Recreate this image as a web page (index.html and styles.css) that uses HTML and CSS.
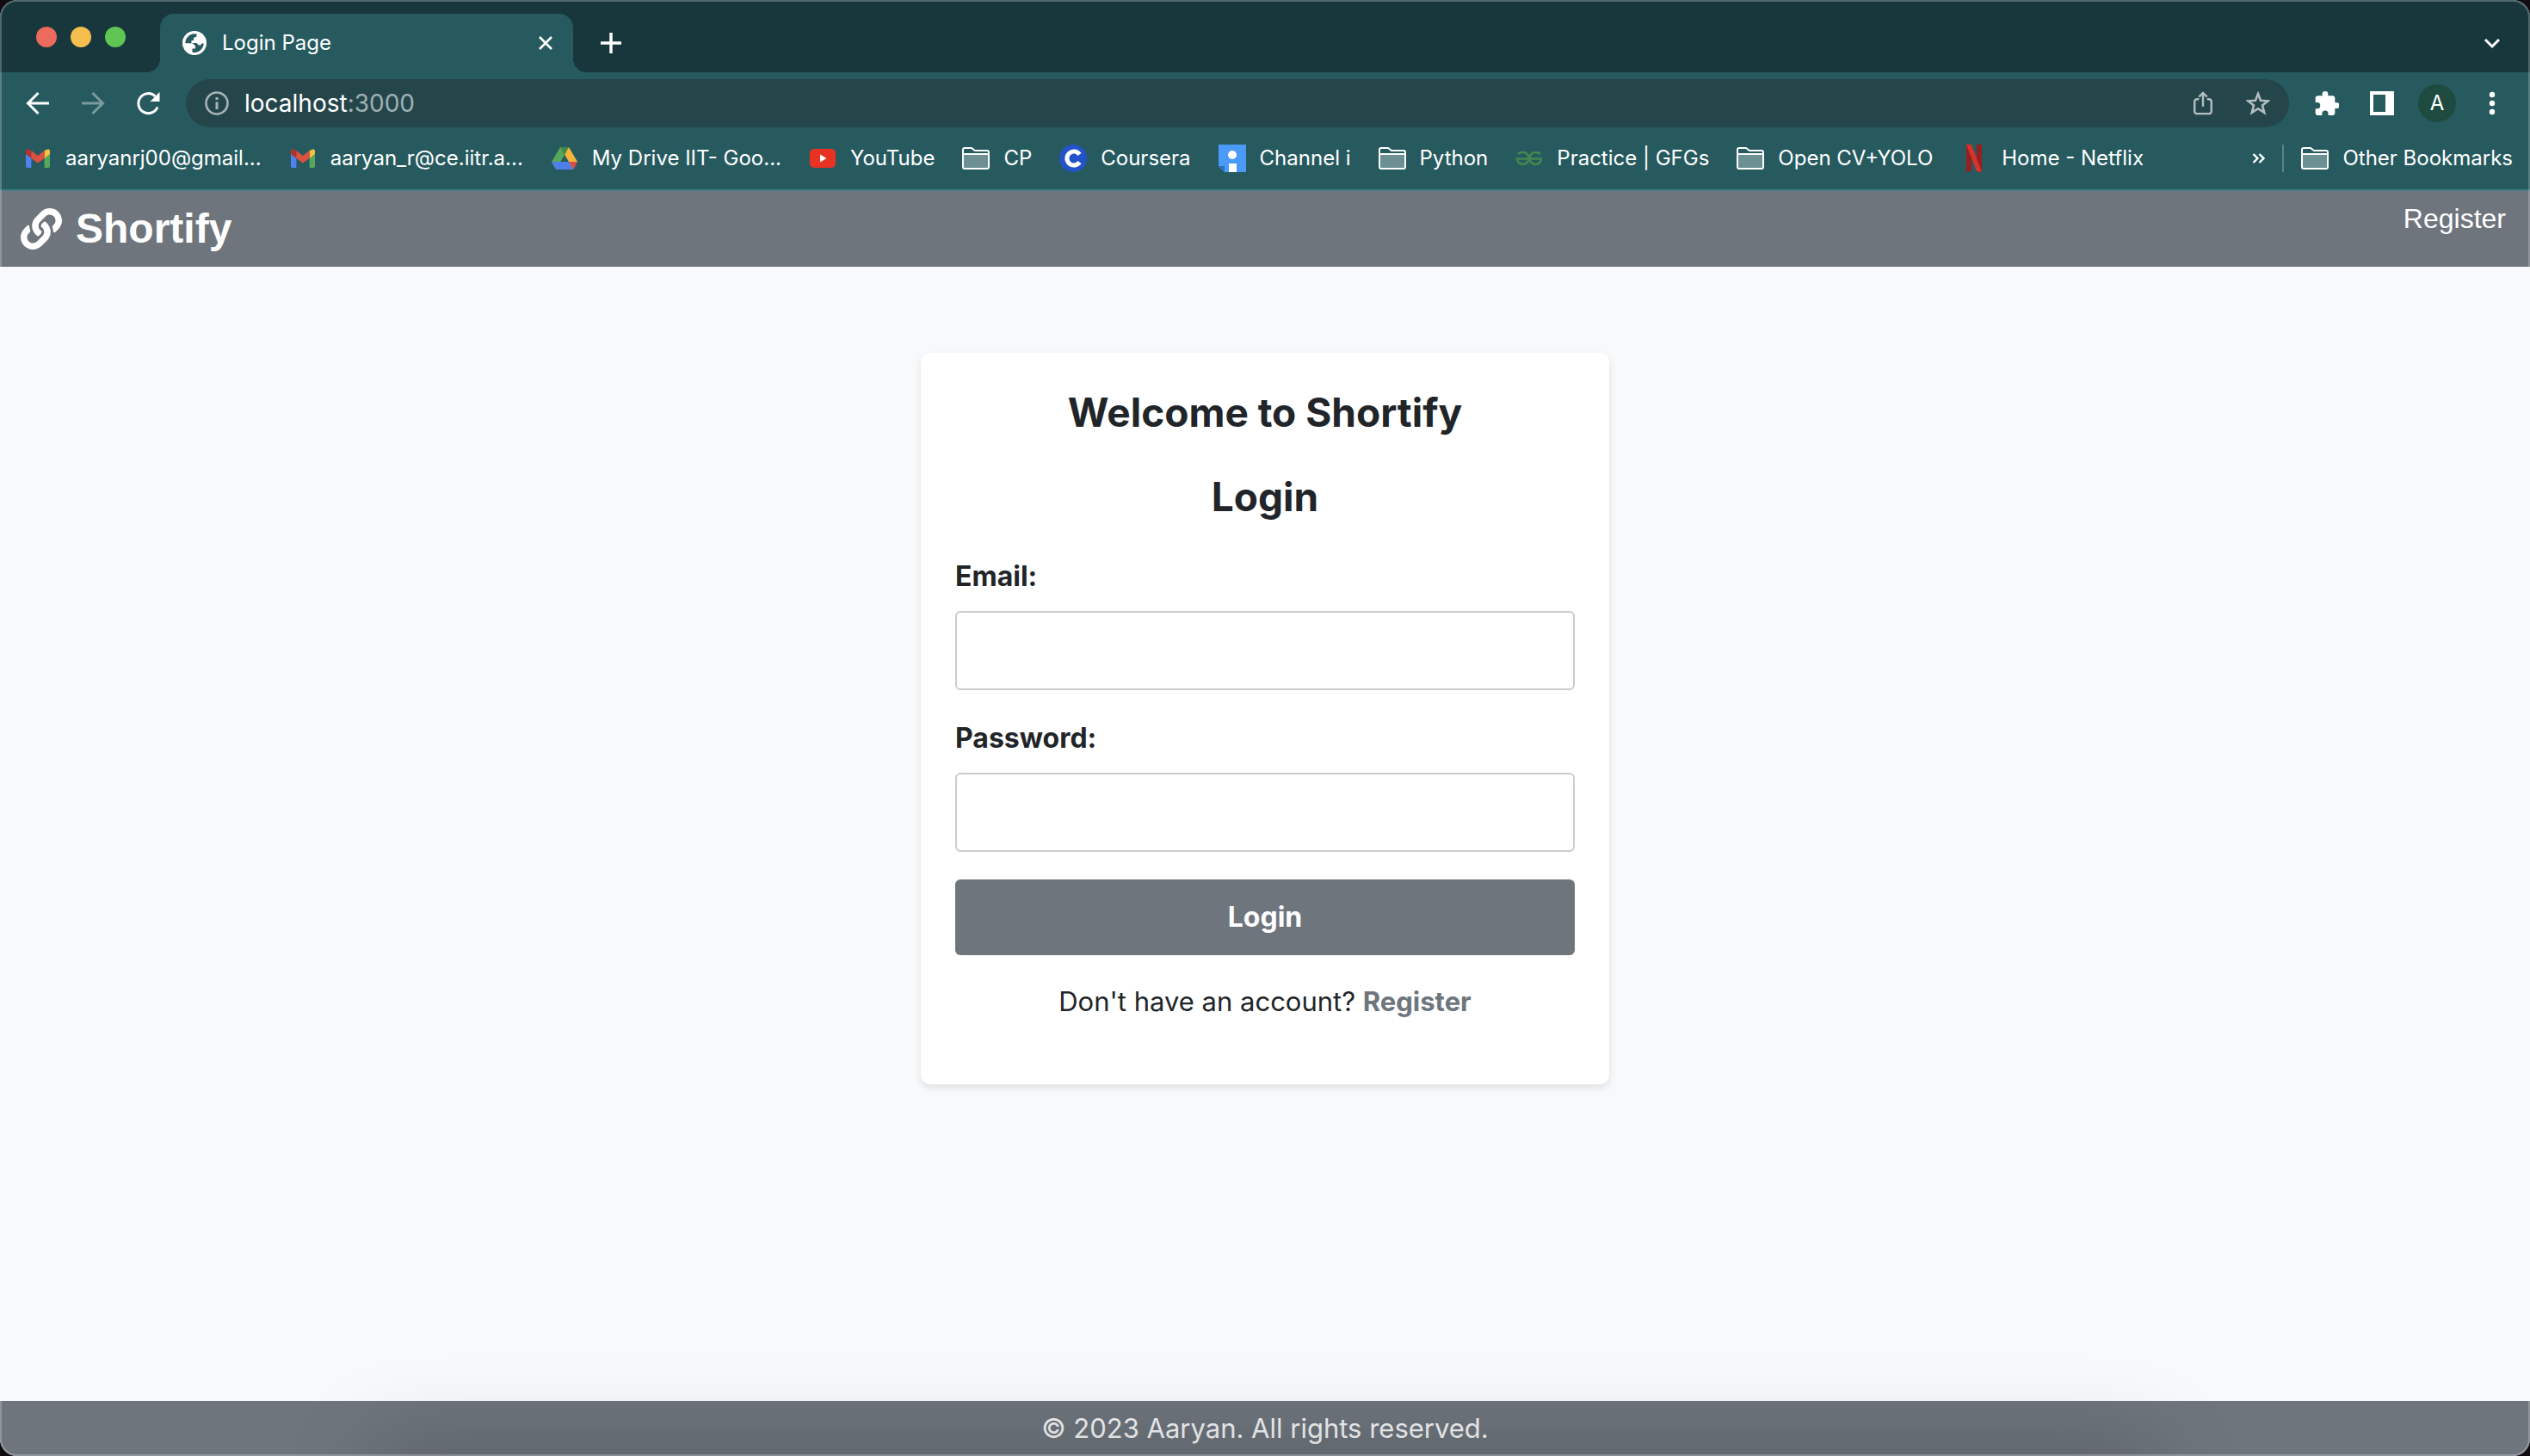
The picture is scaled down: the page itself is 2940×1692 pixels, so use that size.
FILE: index.html
```html
<!DOCTYPE html>
<html lang="en">
<head>
<meta charset="utf-8">
<title>Login Page</title>
<link rel="stylesheet" href="styles.css">
</head>
<body>
<svg class="defs" aria-hidden="true">
  <symbol id="folder" viewBox="0 0 32 26">
    <path d="M2 8H30V24H2Z" fill="#fff" fill-opacity=".32"/>
    <path d="M1 3a2 2 0 0 1 2-2h8l4 3h14a2 2 0 0 1 2 2v17a2 2 0 0 1-2 2H3a2 2 0 0 1-2-2ZM1 8h30" fill="none" stroke="#fff" stroke-width="2"/>
  </symbol>
  <symbol id="gmail" viewBox="0 0 28 22">
    <path d="M0 5v15a2 2 0 0 0 2 2h4.400V9Z" fill="#4e82ee"/>
    <path d="M28 5v15a2 2 0 0 1-2 2h-4.400V9Z" fill="#58a55c"/>
    <path d="M21.600 2 26 .2A2.600 2.600 0 0 1 28 3v3l-6.400 5Z" fill="#f5bf42"/>
    <path d="M6.400 2 2.600.2A2.600 2.600 0 0 0 0 3v3l6.400 5Z" fill="#b5322c"/>
    <path d="M6.400 2 14 8l7.600-6v9L14 16.500 6.400 11Z" fill="#dc5040"/>
  </symbol>
</svg>

<div class="window">
  <header class="tabstrip">
    <div class="lights">
      <button class="light red" aria-label="Close window"></button>
      <button class="light yellow" aria-label="Minimize window"></button>
      <button class="light green" aria-label="Zoom window"></button>
    </div>
    <div class="tab">
      <svg class="i28" viewBox="0 0 28 28"><circle cx="14" cy="14" r="14" fill="#fff"/><path d="M3.300 14.300A11 11 0 0 1 16.500 3.400V6.500L13 8V11h-2.500v3H16.500l2.500 2.500h2l1.500-2h2.300A11 11 0 0 1 11.500 24.700V20.500H15V17.500L12 14.300Z" fill="#265a5f"/></svg>
      <span class="tab-title">Login Page</span>
      <button class="icon" aria-label="Close tab"><svg class="i28" viewBox="0 0 28 28"><path d="m7 7 14 14M21 7 7 21" stroke="#fff" stroke-width="2.600"/></svg></button>
    </div>
    <button class="icon" aria-label="New tab"><svg class="i28" viewBox="0 0 28 28"><path d="M14 2v24M2 14h24" stroke="#fff" stroke-width="3.500"/></svg></button>
    <button class="icon push" aria-label="Search tabs"><svg class="i28" viewBox="0 0 28 28"><path d="m6 10 8 8 8-8" fill="none" stroke="#fff" stroke-width="3"/></svg></button>
  </header>

  <div class="toolbar">
    <button class="icon" aria-label="Back"><svg class="i28" viewBox="0 0 28 28"><path d="M27 14H3M14.500 2 2.500 14l12 12" fill="none" stroke="#fff" stroke-width="3"/></svg></button>
    <button class="icon" aria-label="Forward"><svg class="i28" viewBox="0 0 28 28"><path d="M1 14h24M13.500 2l12 12-12 12" fill="none" stroke="#7b9a9d" stroke-width="3"/></svg></button>
    <button class="icon" aria-label="Reload"><svg class="i28" viewBox="0 0 28 28"><path d="M25 18.500A11.500 11.500 0 1 1 22.500 6" fill="none" stroke="#fff" stroke-width="3"/><path d="M27.500 1v11h-11Z" fill="#fff"/></svg></button>
    <div class="omnibox">
      <button class="icon" aria-label="Site information"><svg class="i28" viewBox="0 0 28 28"><circle cx="14" cy="14" r="12.500" fill="none" stroke="#a7b4b7" stroke-width="2.600"/><path d="M12.500 12.500h3v8.500h-3ZM12.500 7h3v3h-3Z" fill="#a7b4b7"/></svg></button>
      <div class="url" role="textbox" aria-label="Address" tabindex="0">localhost<span class="port">:3000</span></div>
      <button class="icon" aria-label="Share"><svg class="i28" viewBox="0 0 28 30"><path d="M9 10H6.500A3 3 0 0 0 3.500 13v12a3 3 0 0 0 3 3h15a3 3 0 0 0 3-3V13a3 3 0 0 0-3-3H19M14 19V2.500M9 7l5-5 5 5" fill="none" stroke="#b3bdbf" stroke-width="2.600"/></svg></button>
      <button class="icon" aria-label="Bookmark this page"><svg class="i28" viewBox="0 0 28 28"><path d="m14 3 3 7.700 8.500.6-6.500 5.300 2.200 8.200L14 20.200l-7.200 4.600L9 16.600l-6.500-5.300 8.500-.6Z" fill="none" stroke="#b3bdbf" stroke-width="2.600"/></svg></button>
    </div>
    <button class="icon" aria-label="Extensions"><svg class="i28" viewBox="1.500 1 21 21"><path d="M20.500 11H19V7c0-1.100-.9-2-2-2h-4V3.500a2.500 2.500 0 0 0-5 0V5H4c-1.100 0-2 .9-2 2v3.800h1.500a2.700 2.700 0 0 1 0 5.400H2V20c0 1.100.9 2 2 2h3.800v-1.500a2.700 2.700 0 0 1 5.400 0V22H17c1.100 0 2-.9 2-2v-4h1.500a2.500 2.500 0 0 0 0-5Z" fill="#fff"/></svg></button>
    <button class="icon" aria-label="Side panel"><svg class="i28" viewBox="0 0 28 28"><path d="M0 0h28v28H0ZM4 4v20h14V4Z" fill="#fff" fill-rule="evenodd"/></svg></button>
    <button class="avatar" aria-label="Profile">A</button>
    <button class="icon" aria-label="Menu"><svg class="i28" viewBox="0 0 28 28"><g fill="#fff"><circle cx="14" cy="4" r="3.200"/><circle cx="14" cy="14" r="3.200"/><circle cx="14" cy="24" r="3.200"/></g></svg></button>
  </div>

  <nav class="bookmarks" aria-label="Bookmarks">
    <a href="#"><svg class="fav" viewBox="-2 -5 32 32"><use href="#gmail" width="28" height="22"/></svg>aaryanrj00@gmail...</a>
    <a href="#"><svg class="fav" viewBox="-2 -5 32 32"><use href="#gmail" width="28" height="22"/></svg>aaryan_r@ce.iitr.a...</a>
    <a href="#"><svg class="fav" viewBox="0 0 32 32"><path d="M11 3 1 20l5 9 10-17Z" fill="#58a55c"/><path d="M11 3h10l10 17H21Z" fill="#f3b43c"/><path d="M11 3 16 12 21 3Z" fill="#3f8b45"/><path d="M1 20h30l-5 9H6Z" fill="#4e7fe8"/><path d="M21 20h10l-5 9Z" fill="#d9503f"/></svg>My Drive IIT- Goo...</a>
    <a href="#"><svg class="fav" viewBox="0 0 32 32"><rect x="1" y="5" width="30" height="22" rx="5" fill="#e83323"/><path d="m13 11.500 7.500 4.500-7.500 4.500Z" fill="#fff"/></svg>YouTube</a>
    <a href="#"><svg class="fav" viewBox="0 -3 32 32"><use href="#folder" width="32" height="26"/></svg>CP</a>
    <a href="#"><svg class="fav" viewBox="0 0 32 32"><circle cx="16" cy="16" r="16" fill="#2453c9"/><path d="M23.500 11.500a8 8 0 1 0 0 9" fill="none" stroke="#fff" stroke-width="5"/></svg>Coursera</a>
    <a href="#"><svg class="fav" viewBox="0 0 32 32"><path d="M0 0h32v32H7L0 25Z" fill="#4a9afa"/><path d="M0 25h7v7Z" fill="#2c72cc"/><circle cx="16" cy="12" r="5" fill="#fff"/><path d="M12 22h9v10h-9Z" fill="#fff"/></svg>Channel i</a>
    <a href="#"><svg class="fav" viewBox="0 -3 32 32"><use href="#folder" width="32" height="26"/></svg>Python</a>
    <a href="#"><svg class="fav" viewBox="0 0 32 32"><path d="M3 11Q5 9 8.500 9A6.800 7 0 1 1 2 16.500H30A6.800 7 0 1 1 23.500 9Q27 9 29 11" fill="none" stroke="#43884f" stroke-width="2.600"/></svg>Practice | GFGs</a>
    <a href="#"><svg class="fav" viewBox="0 -3 32 32"><use href="#folder" width="32" height="26"/></svg>Open CV+YOLO</a>
    <a href="#"><svg class="fav" viewBox="0 0 32 32"><path d="M7 0h6v31l-6 1ZM19 0h6v32l-6-1Z" fill="#96201f"/><path d="M7 0h6l12 32-6-1Z" fill="#d8322b"/></svg>Home - Netflix</a>
    <button class="icon push" aria-label="More bookmarks"><svg class="i28" viewBox="0 0 28 28"><path d="m8.500 9 5 5-5 5M15.500 9l5 5-5 5" fill="none" stroke="#fff" stroke-width="2.400"/></svg></button>
    <a class="other" href="#"><svg class="fav" viewBox="0 -3 32 32"><use href="#folder" width="32" height="26"/></svg>Other Bookmarks</a>
  </nav>

  <div class="site-header">
    <a class="brand" href="#"><svg class="brand-icon" viewBox="0 0 512 512"><path fill="#fff" d="M326.612 185.391c59.747 59.809 58.927 155.698.36 214.590-.11.120-.24.250-.36.370l-67.200 67.200c-59.270 59.270-155.699 59.262-214.960 0-59.270-59.260-59.270-155.700 0-214.960l37.106-37.106c9.840-9.840 26.786-3.300 27.294 10.606.648 17.722 3.826 35.527 9.690 52.721 1.986 5.822.567 12.262-3.783 16.612l-13.087 13.087c-28.026 28.026-28.905 73.660-1.155 101.960 28.024 28.579 74.086 28.749 102.325.510l67.200-67.190c28.191-28.191 28.073-73.757 0-101.830-3.701-3.694-7.429-6.564-10.341-8.569a16.037 16.037 0 0 1-6.947-12.606c-.396-10.567 3.348-21.456 11.698-29.806l21.054-21.055c5.521-5.521 14.182-6.199 20.584-1.731a152.482 152.482 0 0 1 20.522 17.197zM467.547 44.449c-59.261-59.262-155.690-59.270-214.960 0l-67.200 67.200c-.12.120-.25.250-.36.370-58.566 58.892-59.387 154.781.360 214.590a152.454 152.454 0 0 0 20.521 17.196c6.402 4.468 15.064 3.789 20.584-1.731l21.054-21.055c8.350-8.350 12.094-19.239 11.698-29.806a16.037 16.037 0 0 0-6.947-12.606c-2.912-2.005-6.640-4.875-10.341-8.569-28.073-28.073-28.191-73.639 0-101.830l67.200-67.190c28.239-28.239 74.300-28.069 102.325.510 27.750 28.300 26.872 73.934-1.155 101.960l-13.087 13.087c-4.350 4.350-5.769 10.790-3.783 16.612 5.864 17.194 9.042 34.999 9.690 52.721.509 13.906 17.454 20.446 27.294 10.606l37.106-37.106c59.271-59.259 59.271-155.699.001-214.959z"/></svg>Shortify</a>
    <a class="nav-link" href="#">Register</a>
  </div>

  <main class="main">
    <section class="card">
      <h1>Welcome to Shortify</h1>
      <h2>Login</h2>
      <form class="form">
        <label for="email">Email:</label>
        <input id="email" type="email">
        <label for="password">Password:</label>
        <input id="password" type="password">
        <button class="submit" type="submit">Login</button>
      </form>
      <p class="signup">Don't have an account? <a href="#">Register</a></p>
    </section>
  </main>

  <footer class="footer">© 2023 Aaryan. All rights reserved.</footer>
</div>
</body>
</html>
```

FILE: styles.css
```css
* { box-sizing: border-box; }
body {
  margin: 0;
  background: #100c12;
  color: #212529;
  font: 32px/48px Inter, "Liberation Sans", sans-serif;
}
.defs { display: none; }
svg { display: block; flex: none; }
a { color: inherit; text-decoration: none; }
button {
  border: 0;
  padding: 0;
  background: none;
  color: #fff;
  font: inherit;
}

.window {
  position: relative;
  display: flex;
  flex-direction: column;
  min-height: 100vh;
  overflow: hidden;
  border-radius: 20px;
  background: #f8f9fb;
}
/* light hairline that the system draws round each window */
.window::after {
  content: "";
  position: absolute;
  inset: 0;
  border: 2px solid rgba(255, 255, 255, .24);
  border-radius: 20px;
  pointer-events: none;
}

.icon { display: flex; flex: none; }
.push { margin-left: auto; }
.i28 { width: 28px; height: 28px; }

/* tab strip */
.tabstrip {
  display: flex;
  align-items: center;
  height: 84px;
  padding: 16px 30px 0 42px;
  background: #18373c;
}
.lights {
  display: flex;
  gap: 16px;
  width: 144px;
  padding-bottom: 14px;
}
.light { width: 24px; height: 24px; border-radius: 50%; }
.red { background: #ed6a5e; }
.yellow { background: #f4bf4f; }
.green { background: #61c554; }
.tab {
  position: relative;
  display: flex;
  align-items: center;
  gap: 18px;
  width: 480px;
  height: 68px;
  margin-right: 30px;
  padding: 0 18px 0 26px;
  border-radius: 16px 16px 0 0;
  background: #265a5f;
}
.tab::before,
.tab::after {
  content: "";
  position: absolute;
  bottom: 0;
  width: 16px;
  height: 16px;
}
.tab::before {
  right: 100%;
  background: radial-gradient(circle at 0 0, transparent 16px, #265a5f 16px);
}
.tab::after {
  left: 100%;
  background: radial-gradient(circle at 100% 0, transparent 16px, #265a5f 16px);
}
.tab-title { flex: 1; color: #fff; font-size: 24px; }

/* toolbar */
.toolbar {
  display: flex;
  align-items: center;
  gap: 36px;
  height: 72px;
  padding: 0 30px;
  background: #265a5f;
}
.omnibox {
  display: flex;
  flex: 1;
  align-items: center;
  gap: 36px;
  height: 56px;
  margin-left: -6px;
  margin-right: -6px;
  padding: 0 22px;
  border-radius: 28px;
  background: #24464b;
}
.url { flex: 1; margin-left: -18px; color: #fff; font-size: 28px; }
.port { color: #a0b1b4; }
.avatar {
  width: 44px;
  height: 44px;
  margin: 0 -8px;
  border-radius: 50%;
  background: #1f4a3f;
  font-size: 24px;
  line-height: 44px;
}

/* bookmarks bar */
.bookmarks {
  display: flex;
  align-items: center;
  gap: 32px;
  height: 66px;
  padding: 0 20px 8px 28px;
  border-bottom: 2px solid #447c84;
  background: #265a5f;
  color: #fff;
  font-size: 24px;
  line-height: 32px;
  white-space: nowrap;
}
.bookmarks a { display: flex; gap: 16px; }
.bookmarks .icon { margin-right: -18px; }
.bookmarks .other { padding-left: 20px; border-left: 2px solid #5d8286; }
.fav { width: 32px; height: 32px; }

/* site */
.site-header {
  display: flex;
  align-items: flex-start;
  justify-content: space-between;
  height: 88px;
  padding: 8px 28px 0 24px;
  background: #6e757d;
  color: #fff;
  font-family: "Liberation Sans", Arial, sans-serif;
}
.brand {
  display: flex;
  align-items: center;
  gap: 16px;
  font-size: 48px;
  font-weight: 700;
  line-height: 72px;
}
.brand-icon { width: 48px; height: 48px; }
.main { flex: 1; padding: 100px 40px; }
.card {
  max-width: 800px;
  margin: 0 auto;
  padding: 40px 40px 72px;
  border-radius: 10px;
  background: #fff;
  box-shadow: 0 4px 8px rgba(0, 0, 0, .1);
}
h1, h2 {
  margin: 0 0 40px;
  font-size: 46px;
  font-weight: 700;
  line-height: 58px;
  text-align: center;
}
.form { display: flex; flex-direction: column; }
label { margin-bottom: 16px; font-weight: 700; }
input {
  height: 92px;
  margin-bottom: 32px;
  padding: 20px;
  border: 2px solid #ccc;
  border-radius: 6px;
  background: #fff;
  font: inherit;
}
.submit {
  height: 88px;
  border-radius: 6px;
  background: #6e757d;
  font-weight: 700;
}
.signup { margin: 30px 0 0; font-size: 31px; text-align: center; }
.signup a { color: #6e757d; font-weight: 700; }

.footer {
  position: relative;
  padding: 8px;
  background: #6e757d;
  color: #f3f4f5;
  font-size: 31px;
  text-align: center;
}
/* soft shade along the bottom edge of the window */
.footer::after {
  content: "";
  position: absolute;
  top: 100%;
  left: 15%;
  right: 15%;
  height: 80px;
  box-shadow: 0 0 110px rgba(0, 0, 0, .26);
}
```
